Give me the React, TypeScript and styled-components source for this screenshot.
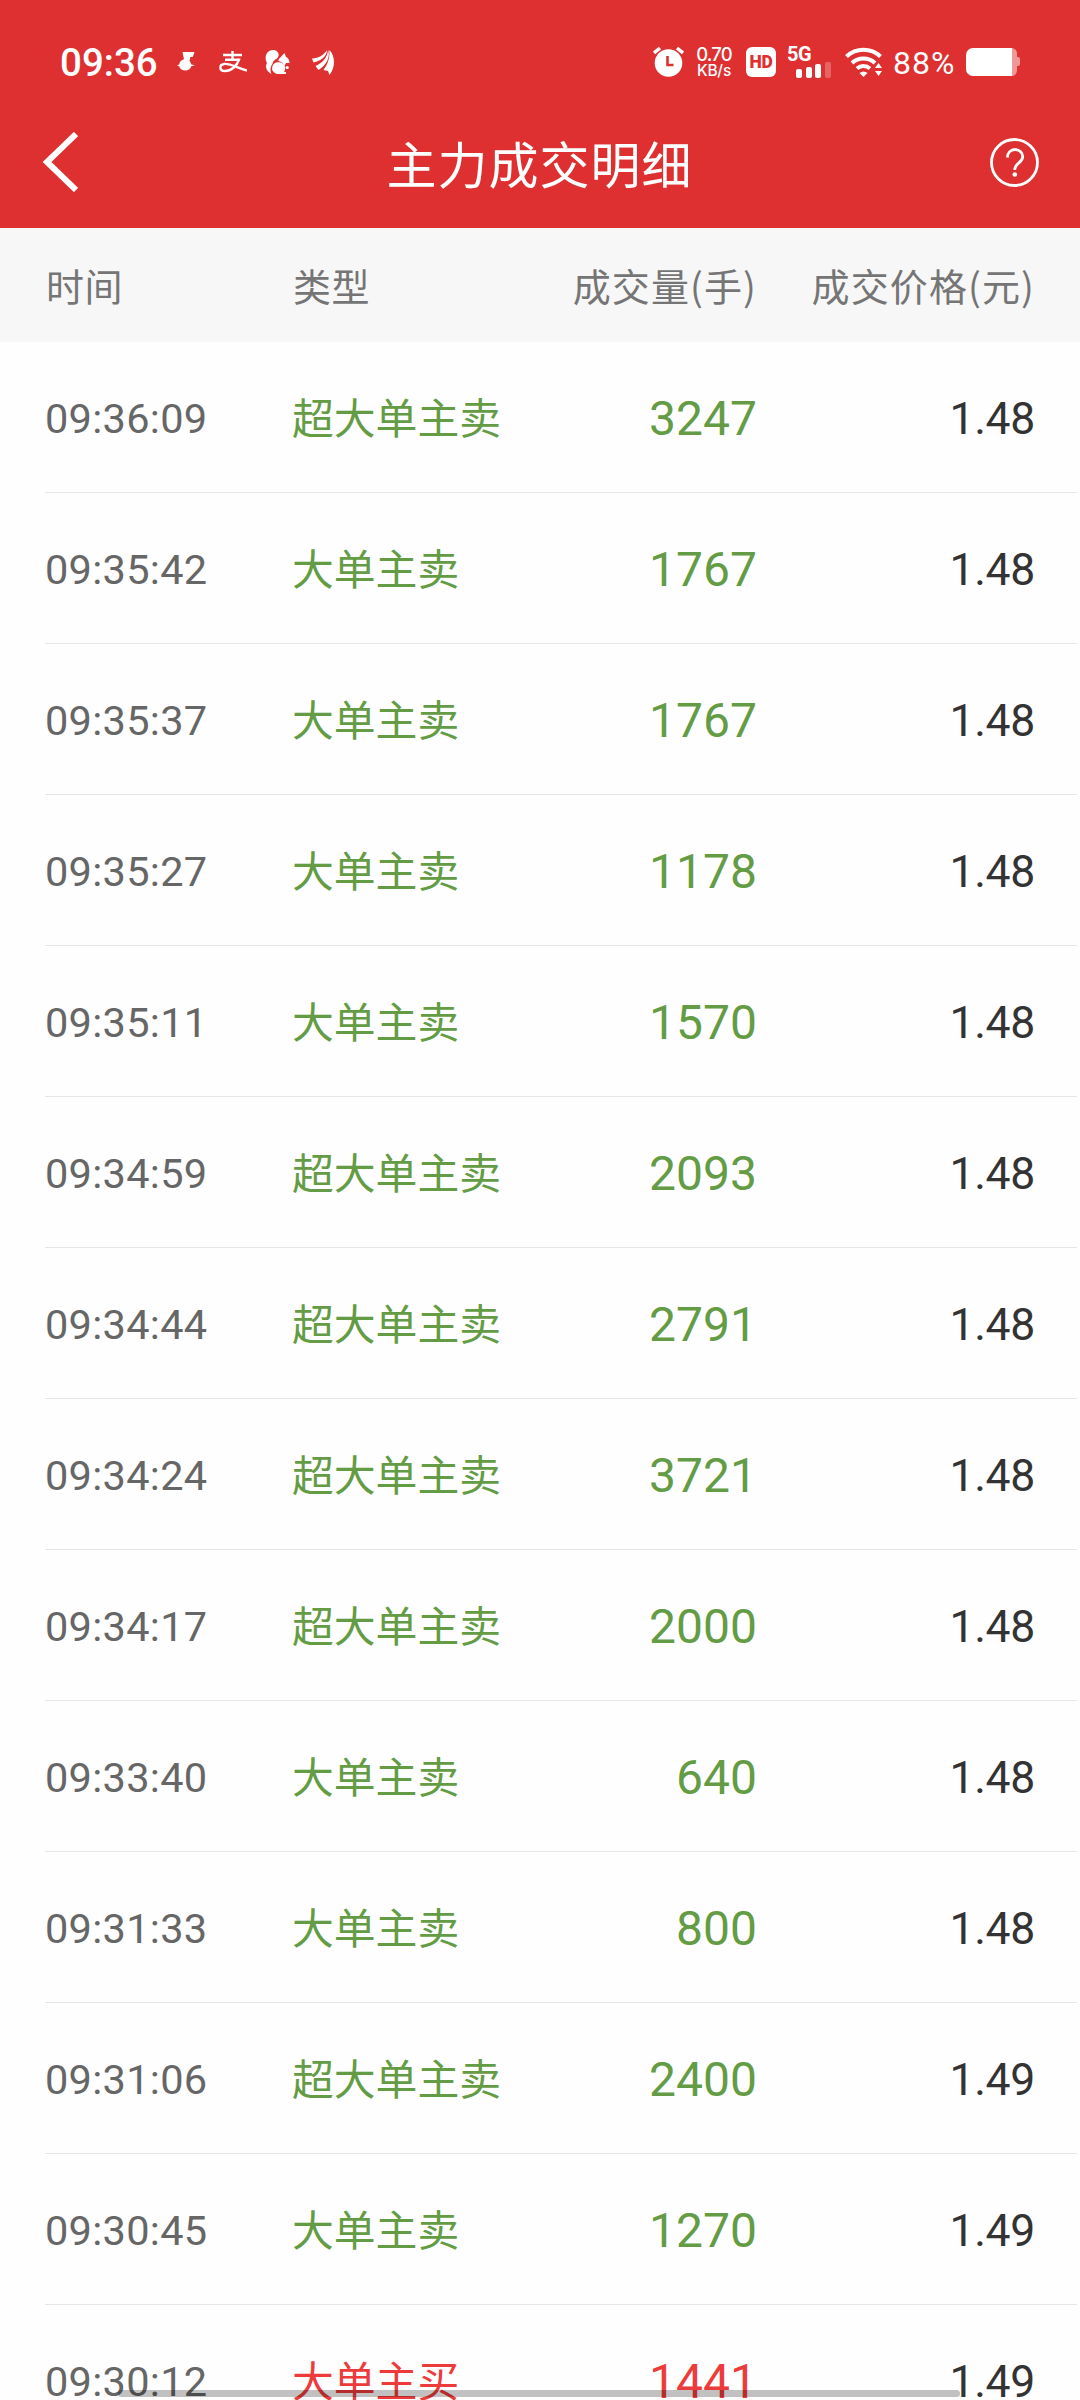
import React from 'react';
import styled, { createGlobalStyle } from 'styled-components';

const Global = createGlobalStyle`
  body { margin: 0; background: #fefefe; }
  * { box-sizing: border-box; }
`;

const latin = `Roboto, 'Noto Sans CJK SC', sans-serif`;
const cjk = `'Noto Sans CJK SC', sans-serif`;

const Screen = styled.main`
  position: relative;
  width: 1080px;
  height: 2400px;
  overflow: hidden;
  display: flex;
  flex-direction: column;
  background: #fefefe;
  font-family: ${cjk};
`;

const Top = styled.header`
  height: 228px;
  flex: none;
  background: #de3031;
  color: #fff;
`;

const StatusBar = styled.div`
  height: 100px;
  padding: 24px 60px 0 60px;
  display: flex;
  justify-content: space-between;
  align-items: center;
`;

const Group = styled.div`
  display: flex;
  align-items: center;
`;

const Clock = styled.span`
  width: 97px;
  padding-top: 1px;
  font: 500 38.500px/40px ${latin};
  white-space: nowrap;
`;

const Glyph = styled.svg<{ $ml?: number }>`
  display: block;
  flex: none;
  margin-left: ${(p) => p.$ml ?? 0}px;
`;

const Speed = styled.span`
  display: flex;
  flex-direction: column;
  align-items: center;
  width: 38px;
  margin-left: 11px;
  white-space: nowrap;
`;

const SpeedValue = styled.span`
  font: 500 18.500px/17px Inter, sans-serif;
  letter-spacing: -0.8px;
`;

const SpeedUnit = styled.span`
  font: 500 15.500px/16px Inter, sans-serif;
  letter-spacing: -0.2px;
`;

const HdBadge = styled.span`
  display: flex;
  align-items: center;
  justify-content: center;
  width: 30px;
  height: 30px;
  margin-left: 13px;
  border-radius: 6px;
  background: #fff;
  color: #de3031;
  font: 900 17.500px/30px ${latin};
  letter-spacing: -0.3px;
`;

const Signal = styled.span`
  display: flex;
  flex-direction: column;
  width: 47px;
  height: 31px;
  margin-left: 11px;
`;

const Net = styled.span`
  height: 15px;
  font: 700 20px/15px ${latin};
  letter-spacing: -0.5px;
`;

const Bars = styled.span`
  display: flex;
  align-items: flex-end;
  gap: 3.500px;
  height: 16px;
  padding-left: 9px;
`;

const Bar = styled.i<{ $h: number; $dim?: boolean }>`
  width: 6px;
  flex: none;
  height: ${(p) => p.$h}px;
  border-radius: 2px;
  background: #fff;
  opacity: ${(p) => (p.$dim ? 0.25 : 1)};
`;

const Percent = styled.span`
  width: 64px;
  margin-left: 10px;
  padding-top: 2px;
  font: 400 32px/36px ${latin};
  letter-spacing: 1px;
  white-space: nowrap;
`;

const TitleBar = styled.div`
  height: 128px;
  padding: 0 40px 0 42px;
  display: flex;
  justify-content: space-between;
  align-items: flex-start;
`;

const BackIcon = styled.svg`
  margin-top: 32px;
`;

const Title = styled.h1`
  margin: 28px 0 0 11px;
  font: 400 50px/68px ${cjk};
  letter-spacing: 1px;
`;

const Help = styled.svg`
  margin-top: 38px;
`;

const columns = `
  display: grid;
  grid-template-columns: 247px 250px 214px 1fr;
  align-items: center;
`;

const HeadRow = styled.div`
  ${columns}
  height: 114px;
  flex: none;
  padding: 0 45px 0 46px;
  background: #f7f7f7;
  color: #757575;
  font-size: 38px;
  line-height: 56px;
  white-space: nowrap;
`;

const HeadCell = styled.span<{ $right?: boolean }>`
  justify-self: ${(p) => (p.$right ? 'end' : 'start')};
  letter-spacing: ${(p) => (p.$right ? 1.1 : 0.4)}px;
`;

const Row = styled.div`
  ${columns}
  height: 151px;
  flex: none;
  margin: 0 3px 0 45px;
  padding-right: 43px;
  border-bottom: 1px solid #e6e6e6;
  white-space: nowrap;
`;

const Time = styled.span`
  padding-top: 4px;
  font: 400 41.500px/60px ${latin};
  letter-spacing: 0.3px;
  color: #666;
`;

const Kind = styled.span<{ $buy?: boolean }>`
  padding-bottom: 2px;
  font: 400 41.800px/60px ${cjk};
  color: ${(p) => (p.$buy ? '#ed3b3b' : '#639c44')};
`;

const Volume = styled.span<{ $buy?: boolean }>`
  justify-self: end;
  padding-top: 4px;
  margin-right: -1px;
  font: 400 48px/60px ${latin};
  color: ${(p) => (p.$buy ? '#ed3b3b' : '#639c44')};
`;

const Price = styled.span`
  justify-self: end;
  padding-top: 4px;
  margin-right: -1px;
  font: 400 44.500px/60px ${latin};
  letter-spacing: -0.3px;
  color: #333;
`;

const HomeBar = styled.div`
  position: absolute;
  left: 118px;
  top: 2390px;
  width: 842px;
  height: 7px;
  border-radius: 4px;
  background: rgba(0, 0, 0, 0.24);
`;

type Trade = [string, string, number, string];

const trades: Trade[] = [
  ['09:36:09', '超大单主卖', 3247, '1.48'],
  ['09:35:42', '大单主卖', 1767, '1.48'],
  ['09:35:37', '大单主卖', 1767, '1.48'],
  ['09:35:27', '大单主卖', 1178, '1.48'],
  ['09:35:11', '大单主卖', 1570, '1.48'],
  ['09:34:59', '超大单主卖', 2093, '1.48'],
  ['09:34:44', '超大单主卖', 2791, '1.48'],
  ['09:34:24', '超大单主卖', 3721, '1.48'],
  ['09:34:17', '超大单主卖', 2000, '1.48'],
  ['09:33:40', '大单主卖', 640, '1.48'],
  ['09:31:33', '大单主卖', 800, '1.48'],
  ['09:31:06', '超大单主卖', 2400, '1.49'],
  ['09:30:45', '大单主卖', 1270, '1.49'],
  ['09:30:12', '大单主买', 1441, '1.49'],
];

export default function App() {
  return (
    <Screen>
      <Global />
      <Top>
        <StatusBar>
          <Group>
            <Clock>09:36</Clock>
            <Glyph $ml={20} width="18" height="21" viewBox="0 0 18 21" fill="#fff">
              <path d="M5.500 0H17.500L15.800 5H13.300L12.600 9.300A6.400 6.400 0 0 1 14.300 12.600L18 13.200L14.200 14.200A6.300 6.300 0 0 1 2.200 14.200L0 13.200L2.200 12.500A6.400 6.400 0 0 1 7 7.300z" />
            </Glyph>
            <Glyph $ml={24} width="28" height="22" viewBox="0 0 28 22" fill="none" stroke="#fff" strokeWidth="2.400">
              <path d="M4 4h19M13.500 0v9M6 8.700h14C18 15 12 20 6 20c-6 0-6-6-1-7 6-1 13 4 23 6.500" />
            </Glyph>
            <Glyph $ml={18} width="25" height="25" viewBox="0 0 25 25" fill="#fff">
              <path d="M6.500 24C2 22-.5 17.500 2 13-1 8 1 0 8 0c5 0 7.500 5 4 8.500C9 10 7.500 12 7.500 14c-2.500 3-2.500 7-1 10z" />
              <path d="M13.500 9.500L19.500 3l1.500 4c2.500 1 3.500 3.500 3.500 6h-3.500l-1.500 3c-1-2.500-3-4.500-6-5z" />
              <path d="M14 12.300a6 6 0 0 1 5.500 8.700l-.5 1h2v2h-9a5.900 5.900 0 0 1 2-11.700z" />
              <circle cx="22.200" cy="17.500" r="1.600" />
            </Glyph>
            <Glyph $ml={22} width="23" height="25" viewBox="0 0 23 25" fill="#fff">
              <path d="M0 8.500C7 8.500 12 4.500 15 0c0 6-6 11-13.500 12.500z" />
              <path d="M3.500 16C10.500 13 15 8 16.200 0c2.300 8-2 15-9.700 20z" />
              <path d="M11.500 20c4.500-6 6.500-12 5.800-20 5.700 5 6.700 17 .2 25l-1.500-4z" />
            </Glyph>
          </Group>
          <Group>
            <Glyph width="31" height="32" viewBox="0 0 31 32" fill="none">
              <circle cx="15.500" cy="17" r="13.800" fill="#fff" />
              <path d="M1 7l6-5M30 7l-6-5" stroke="#fff" strokeWidth="3.500" />
              <path d="M14.500 10v9h6" stroke="#de3031" strokeWidth="2.600" />
            </Glyph>
            <Speed>
              <SpeedValue>0.70</SpeedValue>
              <SpeedUnit>KB/s</SpeedUnit>
            </Speed>
            <HdBadge>HD</HdBadge>
            <Signal>
              <Net>5G</Net>
              <Bars>
                <Bar $h={9} />
                <Bar $h={11} />
                <Bar $h={14} />
                <Bar $h={16} $dim />
              </Bars>
            </Signal>
            <Glyph $ml={11} width="38" height="30" viewBox="0 0 38 30" fill="none" stroke="#fff" strokeWidth="4">
              <path d="M1.500 9.500a25 25 0 0 1 34 0M7 16a17 17 0 0 1 23 0M12 21.500a10 10 0 0 1 13 0" />
              <path d="M14.500 26q4-3 8 0l-4 4z" fill="#fff" stroke="none" />
              <path d="M30 21l3.500-5 3.500 5zM30 24h7l-3.500 5z" fill="#fff" stroke="none" />
            </Glyph>
            <Percent>88%</Percent>
            <Glyph $ml={9} width="54" height="28" viewBox="0 0 54 28" fill="#fff">
              <path d="M46 0a6 6 0 0 1 5 6v3h1a2 2 0 0 1 2 2v5a2 2 0 0 1-2 2h-1v4a6 6 0 0 1-5 6z" opacity=".5" />
              <path d="M7 0h39v28H7a7 7 0 0 1-7-7V7a7 7 0 0 1 7-7z" />
            </Glyph>
          </Group>
        </StatusBar>
        <TitleBar>
          <BackIcon width="36" height="60" viewBox="0 0 36 60" fill="none" stroke="#fff" strokeWidth="6">
            <path d="M34 2L5 30l29 28" />
          </BackIcon>
          <Title>主力成交明细</Title>
          <Help width="50" height="50" viewBox="0 0 50 50" fill="none" stroke="#fff">
            <circle cx="24.500" cy="24.500" r="23" strokeWidth="2.800" />
            <path d="M17.500 19.500c0-5 3.300-8 7.500-8s7.700 2.800 7.700 7.200c0 6-8 6.500-8 13.300" strokeWidth="2.800" />
            <circle cx="24.800" cy="36.500" r="2.300" fill="#fff" stroke="none" />
          </Help>
        </TitleBar>
      </Top>
      <HeadRow>
        <HeadCell>时间</HeadCell>
        <HeadCell>类型</HeadCell>
        <HeadCell $right>成交量(手)</HeadCell>
        <HeadCell $right>成交价格(元)</HeadCell>
      </HeadRow>
      {trades.map(([time, kind, volume, price]) => {
        const buy = kind.endsWith('买');
        return (
          <Row key={time}>
            <Time>{time}</Time>
            <Kind $buy={buy}>{kind}</Kind>
            <Volume $buy={buy}>{volume}</Volume>
            <Price>{price}</Price>
          </Row>
        );
      })}
      <HomeBar />
    </Screen>
  );
}
